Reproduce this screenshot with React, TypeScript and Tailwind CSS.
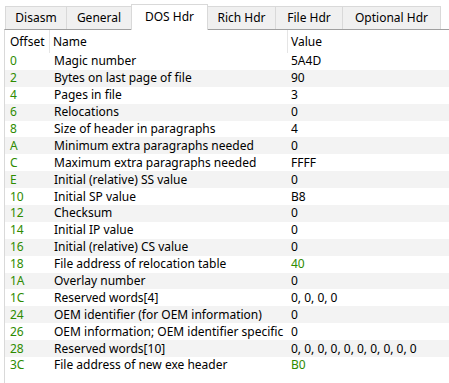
import type { FC } from "react";

const tabs = ["Disasm", "General", "DOS Hdr", "Rich Hdr", "File Hdr", "Optional Hdr"];
const tabWidths = ["w-[62px]", "w-[66px]", "w-[77px]", "w-[69px]", "w-[68px]", "w-[99px]"];

const rows: [string, string, string, boolean?][] = [
  ["0", "Magic number", "5A4D"],
  ["2", "Bytes on last page of file", "90"],
  ["4", "Pages in file", "3"],
  ["6", "Relocations", "0"],
  ["8", "Size of header in paragraphs", "4"],
  ["A", "Minimum extra paragraphs needed", "0"],
  ["C", "Maximum extra paragraphs needed", "FFFF"],
  ["E", "Initial (relative) SS value", "0"],
  ["10", "Initial SP value", "B8"],
  ["12", "Checksum", "0"],
  ["14", "Initial IP value", "0"],
  ["16", "Initial (relative) CS value", "0"],
  ["18", "File address of relocation table", "40", true],
  ["1A", "Overlay number", "0"],
  ["1C", "Reserved words[4]", "0, 0, 0, 0"],
  ["24", "OEM identifier (for OEM information)", "0"],
  ["26", "OEM information; OEM identifier specific", "0"],
  ["28", "Reserved words[10]", "0, 0, 0, 0, 0, 0, 0, 0, 0, 0"],
  ["3C", "File address of new exe header", "B0", true],
];

const App: FC = () => (
  <div className="w-[449px] h-[383px] bg-white overflow-hidden text-[12px] text-black font-['Noto_Sans',sans-serif] leading-[16px]">
    {/* tab strip */}
    <div className="flex items-end h-[29px] pl-[5px]">
      {tabs.map((t, i) =>
        i === 2 ? (
          <div
            key={t}
            className={`${tabWidths[i]} h-[26px] -ml-px bg-white border border-b-0 border-[#d9d9d9] flex items-center justify-center pb-[2px] -mb-px relative z-10`}
          >
            {t}
          </div>
        ) : (
          <div
            key={t}
            className={`${tabWidths[i]} h-[23px] bg-[#f0f0f0] border border-b-0 border-[#d9d9d9] -ml-px first:ml-0 flex items-center justify-center`}
          >
            {t}
          </div>
        )
      )}
    </div>

    {/* list panel */}
    <div className="ml-[4px] border-t border-t-[#a0a0a0] border-l border-l-[#d9d9d9] h-[355px]">
      <div className="flex h-[23px] items-stretch">
        <div className="w-[45px] pl-[5px] flex items-center border-r border-[#e5e5e5]">Offset</div>
        <div className="w-[238px] pl-[3px] flex items-center border-r border-[#e5e5e5]">Name</div>
        <div className="flex-1 pl-[3px] flex items-center">Value</div>
      </div>
      {rows.map(([off, name, val, green], i) => (
        <div
          key={off}
          className={`flex h-[16.9px] items-center whitespace-nowrap ${i % 2 === 1 ? "bg-[#f3f3f3]" : ""}`}
        >
          <div className="w-[46px] pl-[5px] text-[#2e8b00]">{off}</div>
          <div className="w-[239px] pl-[3px] overflow-hidden">{name}</div>
          <div className={`flex-1 pl-[1px] ${green ? "text-[#2e8b00]" : ""}`}>{val}</div>
        </div>
      ))}
    </div>
  </div>
);

export default App;
